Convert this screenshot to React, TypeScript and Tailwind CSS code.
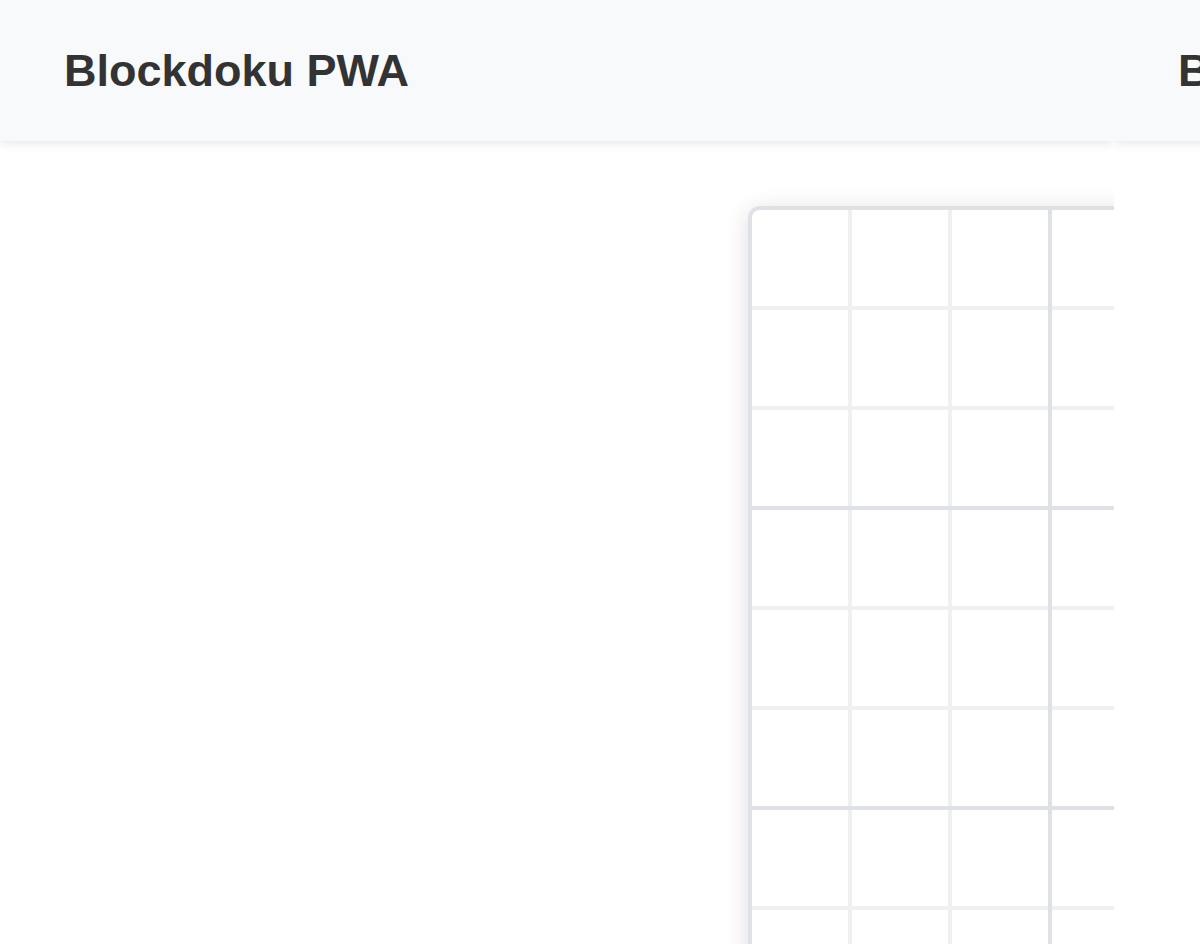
import React from "react";

function Box() {
  return (
    <div className="grid grid-cols-3 gap-[4px] bg-[#eef0f2]">
      {Array.from({ length: 9 }).map((_, i) => (
        <div key={i} className="w-[96px] h-[96px] bg-white" />
      ))}
    </div>
  );
}

function Panel() {
  return (
    <div className="w-[1114px] shrink-0 h-[944px] overflow-hidden relative bg-white">
      <header className="relative z-10 h-[141px] bg-[#f8f9fa] px-[64px] flex items-center shadow-[0_2px_10px_rgba(0,0,0,0.1)]">
        <h1 className="text-[45px] font-bold text-[#333333] font-['Liberation_Sans',Arial,sans-serif] leading-none whitespace-nowrap">
          Blockdoku PWA
        </h1>
      </header>
      <main className="pt-[65px] pl-[748px]">
        <div className="w-[904px] border-[4px] border-[#dee2e6] rounded-[12px] bg-[#dee2e6] shadow-[0_4px_24px_rgba(0,0,0,0.14)] overflow-hidden">
          <div className="grid grid-cols-3 gap-[4px]">
            {Array.from({ length: 9 }).map((_, i) => (
              <Box key={i} />
            ))}
          </div>
        </div>
      </main>
    </div>
  );
}

export default function App() {
  return (
    <div className="w-[1200px] h-[944px] overflow-hidden flex bg-white">
      <Panel />
      <Panel />
    </div>
  );
}
